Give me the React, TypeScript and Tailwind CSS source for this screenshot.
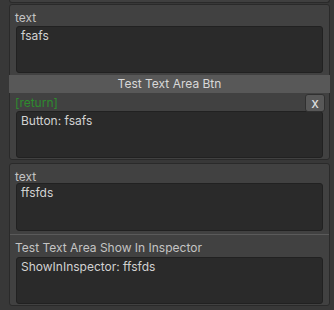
export default function App() {
  return (
    <div className="h-[310px] w-[334px] overflow-hidden bg-[#383838] font-['Inter',sans-serif] text-[12px] text-[#c4c4c4]">
      <div className="ml-[9px] mr-[4px] h-[3px] rounded-b-[3px] border-x border-b border-[#2a2a2a] bg-[#3f3f3f]" />
      <div className="ml-[9px] mr-[4px] mt-[1px] h-[156px] rounded-[3px] border border-[#2a2a2a] bg-[#414141]">
        <div className="px-[5px] pt-[6px] leading-[14px]">text</div>
        <div className="mx-[6px] mt-[1px] h-[47px] rounded-[3px] border border-[#212121] bg-[#2a2a2a] px-[4px] pt-[2px] leading-[14px] text-[#d2d2d2]">
          fsafs
        </div>
        <div className="mx-[-1px] mt-[2px] h-[18px] bg-[#585858] text-center leading-[18px] text-[#d8d8d8]">
          Test Text Area Btn
        </div>
        <div className="flex items-center justify-between pl-[5px] pr-[4px] pt-[1px]">
          <span className="leading-[14px] text-[#2e8b2e]">[return]</span>
          <button className="h-[18px] w-[20px] rounded-[3px] border border-[#303030] bg-[#585858] text-[14px] leading-[14px] text-[#e0e0e0]">
            x
          </button>
        </div>
        <div className="mx-[6px] mt-[-1px] h-[47px] rounded-[3px] border border-[#212121] bg-[#2a2a2a] px-[4px] pt-[2px] leading-[14px] text-[#d2d2d2]">
          Button: fsafs
        </div>
      </div>
      <div className="ml-[9px] mr-[4px] mt-[3px] h-[143px] rounded-[3px] border border-[#2a2a2a] bg-[#414141]">
        <div className="px-[5px] pt-[6px] leading-[14px]">text</div>
        <div className="mx-[6px] mt-[-1px] h-[48px] rounded-[3px] border border-[#212121] bg-[#2a2a2a] px-[4px] pt-[2px] leading-[14px] text-[#d2d2d2]">
          ffsfds
        </div>
        <div className="mt-[3px] h-[1px] bg-[#5a5a5a]" />
        <div className="px-[5px] pt-[6px] leading-[14px]">Test Text Area Show In Inspector</div>
        <div className="mx-[6px] mt-[2px] h-[47px] rounded-[3px] border border-[#212121] bg-[#2a2a2a] px-[4px] pt-[2px] leading-[14px] text-[#d2d2d2]">
          ShowInInspector: ffsfds
        </div>
      </div>
    </div>
  );
}
